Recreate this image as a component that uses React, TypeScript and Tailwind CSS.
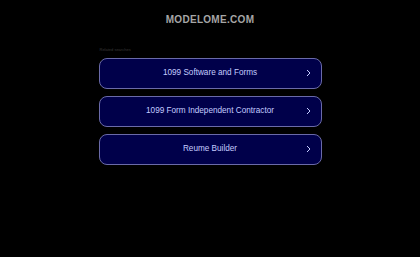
import React from "react"

const ITEMS = ["1099 Software and Forms", "1099 Form Independent Contractor", "Reume Builder"]

function Chevron() {
  return (
    <svg width="5" height="8" viewBox="0 0 5 8" className="absolute right-[10px] top-[10px]">
      <path d="M1 1l3 3-3 3" fill="none" stroke="#c4ccff" strokeWidth="1" />
    </svg>
  )
}

export default function App() {
  return (
    <div
      className="w-[420px] h-[257px] bg-black flex flex-col items-center"
      style={{ fontFamily: '"Liberation Sans", Arial, sans-serif' }}
    >
      <div className="mt-[14px] text-[10px] leading-[12px] font-bold tracking-[0.3px] text-[#a6a6a6]">
        MODELOME.COM
      </div>
      <div className="mt-[21px] w-[223px]">
        <div className="text-[4px] leading-[6px] text-[#3a3a3a] pl-px">Related searches</div>
        <div className="mt-[5px] flex flex-col gap-[7px]">
          {ITEMS.map((t) => (
            <div
              key={t}
              className="relative h-[31px] rounded-[8px] border border-[#6a6aa8] bg-[#00004a] flex items-center justify-center text-[8.2px] text-[#c4ccff]"
            >
              {t}
              <Chevron />
            </div>
          ))}
        </div>
      </div>
    </div>
  )
}
